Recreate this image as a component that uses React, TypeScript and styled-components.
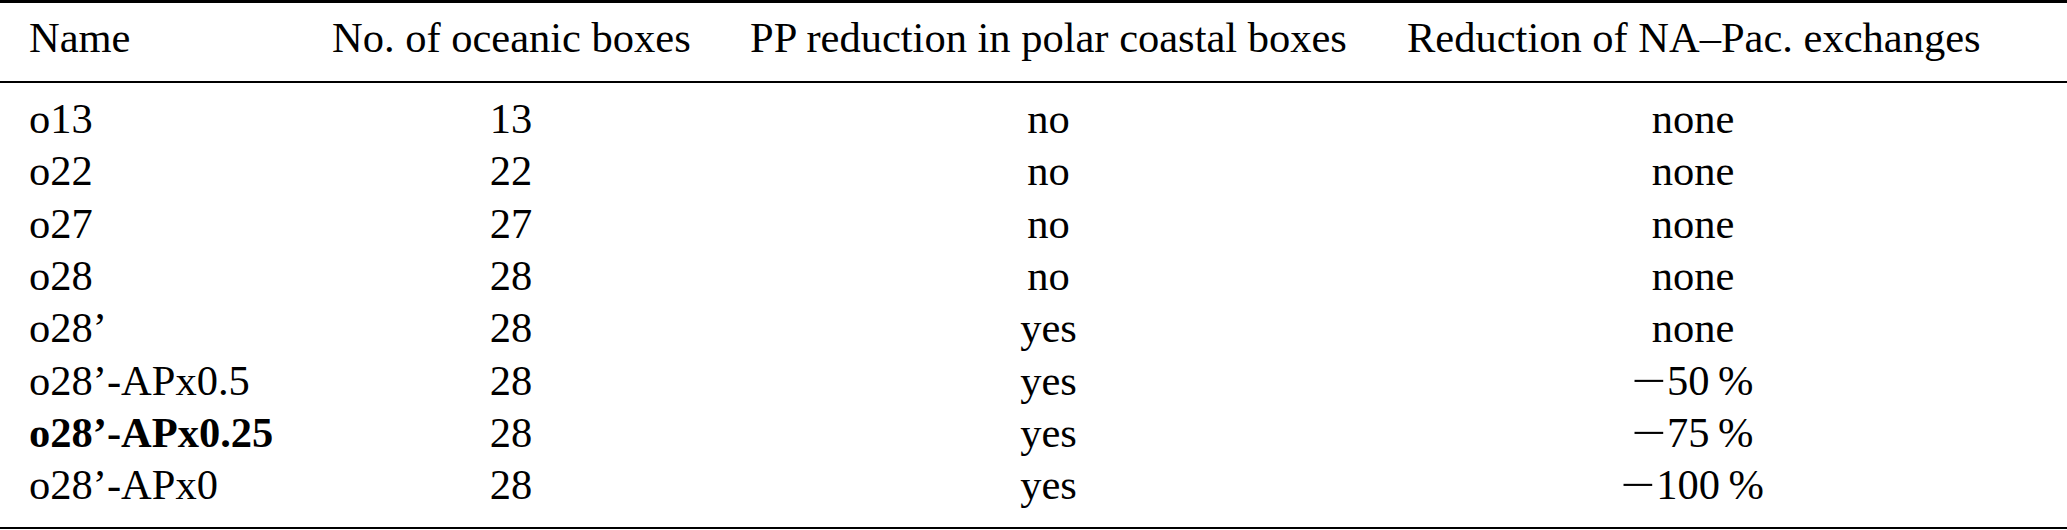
import React from "react";
import styled, { createGlobalStyle } from "styled-components";

const GlobalStyle = createGlobalStyle`
  html, body {
    margin: 0;
    padding: 0;
    background: #ffffff;
  }
`;

const Table = styled.div`
  width: 2067px;
  font-family: "Liberation Serif", "Times New Roman", serif;
  font-size: 42.5px;
  color: #000;
`;

const Rule = styled.div<{ $thickness: number }>`
  height: ${(p) => p.$thickness}px;
  background: #000;
`;

const Section = styled.div<{ $top: number; $bottom: number }>`
  padding-top: ${(p) => p.$top}px;
  padding-bottom: ${(p) => p.$bottom}px;
`;

const Row = styled.div`
  display: grid;
  grid-template-columns: 303px 416px 659px 630px;
  line-height: 52.3px;
`;

const Cell = styled.div<{ $align?: "left" | "center"; $bold?: boolean }>`
  padding: 0 29px;
  text-align: ${(p) => p.$align ?? "center"};
  font-weight: ${(p) => (p.$bold ? 700 : 400)};
  white-space: nowrap;
`;

const Minus = styled.span`
  display: inline-block;
  transform: scaleX(1.45);
  margin: 0 0.14em 0 0.1em;
`;

const Unit = styled.span`
  margin-left: 0.2em;
`;

type Entry = {
  name: string;
  boxes: number;
  pp: string;
  red: number | null;
  bold?: boolean;
};

const rows: Entry[] = [
  { name: "o13", boxes: 13, pp: "no", red: null },
  { name: "o22", boxes: 22, pp: "no", red: null },
  { name: "o27", boxes: 27, pp: "no", red: null },
  { name: "o28", boxes: 28, pp: "no", red: null },
  { name: "o28\u2019", boxes: 28, pp: "yes", red: null },
  { name: "o28\u2019-APx0.5", boxes: 28, pp: "yes", red: 50 },
  { name: "o28\u2019-APx0.25", boxes: 28, pp: "yes", red: 75, bold: true },
  { name: "o28\u2019-APx0", boxes: 28, pp: "yes", red: 100 },
];

function Reduction({ value }: { value: number | null }) {
  if (value === null) return <>none</>;
  return (
    <>
      <Minus>{"\u2212"}</Minus>
      {value}
      <Unit>%</Unit>
    </>
  );
}

export default function App() {
  return (
    <>
      <GlobalStyle />
      <Table>
        <Rule $thickness={2.5} />
        <Section $top={9.3} $bottom={17}>
          <Row>
            <Cell $align="left">Name</Cell>
            <Cell>No. of oceanic boxes</Cell>
            <Cell>PP reduction in polar coastal boxes</Cell>
            <Cell>Reduction of NA–Pac. exchanges</Cell>
          </Row>
        </Section>
        <Rule $thickness={1.5} />
        <Section $top={10.5} $bottom={15.5}>
          {rows.map((r) => (
            <Row key={r.name}>
              <Cell $align="left" $bold={r.bold}>
                {r.name}
              </Cell>
              <Cell>{r.boxes}</Cell>
              <Cell>{r.pp}</Cell>
              <Cell>
                <Reduction value={r.red} />
              </Cell>
            </Row>
          ))}
        </Section>
        <Rule $thickness={2.5} />
      </Table>
    </>
  );
}
